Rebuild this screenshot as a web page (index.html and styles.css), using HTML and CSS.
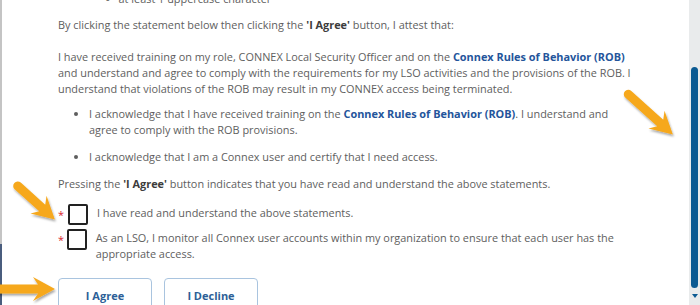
FILE: index.html
```html
<!DOCTYPE html>
<html lang="en">
<head>
    <meta charset="UTF-8">
    <title>Rules of Behavior</title>
    <link rel="stylesheet" href="styles.css">
</head>
<body>
    <div class="frame">
        <div class="content">
            <ul class="rules">
                <li>at least 1 uppercase character</li>
            </ul>
            <p class="attest">By clicking the statement below then clicking the <b>'I Agree'</b> button, I attest that:</p>
            <p>I have received training on my role, CONNEX Local Security Officer and on the <a href="#">Connex Rules of Behavior (ROB)</a> and understand and agree to comply with the requirements for my LSO activities and the provisions of the ROB. I understand that violations of the ROB may result in my CONNEX access being terminated.</p>
            <ul class="acks">
                <li>I acknowledge that I have received training on the <a href="#">Connex Rules of Behavior (ROB)</a>. I understand and agree to comply with the ROB provisions.</li>
                <li>I acknowledge that I am a Connex user and certify that I need access.</li>
            </ul>
            <p>Pressing the <b>'I Agree'</b> button indicates that you have read and understand the above statements.</p>
            <label class="confirm">
                <span class="req">*</span>
                <span class="box"></span>
                <span class="label-text">I have read and understand the above statements.</span>
            </label>
            <label class="confirm">
                <span class="req">*</span>
                <span class="box"></span>
                <span class="label-text">As an LSO, I monitor all Connex user accounts within my organization to ensure that each user has the appropriate access.</span>
            </label>
            <div class="actions">
                <button type="button">I Agree</button>
                <button type="button">I Decline</button>
            </div>
        </div>
        <div class="scrollbar">
            <div class="thumb"></div>
            <div class="down"></div>
        </div>
    </div>

    <!-- callout arrows drawn over the screenshot -->
    <svg class="arrows" width="700" height="305" viewBox="0 0 700 305">
        <defs>
            <filter id="shadow" x="-20%" y="-20%" width="140%" height="140%">
                <feDropShadow dx="1" dy="2" stdDeviation="1.2" flood-color="#000" flood-opacity="0.35"/>
            </filter>
        </defs>
        <g fill="#f6a81c" filter="url(#shadow)">
            <path d="M3 -4.5 L-40 -4.5 A4.5 4.5 0 0 0 -40 4.5 L3 4.5 L-2 12 L20 0 L-2 -12 Z" transform="translate(658 121) rotate(42)"/>
            <path d="M3 -4.5 L-30 -4.5 A4.5 4.5 0 0 0 -30 4.5 L3 4.5 L-2 12 L20 0 L-2 -12 Z" transform="translate(40 206) rotate(42)"/>
            <path d="M3 -4.5 L-40 -4.5 L-40 4.5 L3 4.5 L-2 12 L20 0 L-2 -12 Z" transform="translate(35 289)"/>
        </g>
    </svg>
</body>
</html>
```

FILE: styles.css
```css
* {
    margin: 0;
    padding: 0;
    box-sizing: border-box;
}

body {
    font-family: 'Open Sans', sans-serif;
    font-size: 10.9px;
    line-height: 16px;
    color: #5e5e5e;
    background-color: #fff;
    width: 700px;
    height: 305px;
    overflow: hidden;
}

.frame {
    display: flex;
    height: 305px;
    border-left: 2px solid #c4c4c4;
    border-image: linear-gradient(to bottom, #c4c4c4 243px, #4a5d7e 243px) 1;
}

.content {
    flex: 1;
    min-width: 0;
    margin-top: -9px;
    padding: 0 52px 0 56px;
}

a {
    color: #24559b;
    font-weight: 700;
    text-decoration: none;
}

b {
    color: #3c3c3c;
}

p {
    margin-bottom: 12px;
}

.attest {
    margin-top: 10px;
    margin-bottom: 16px;
}

.rules {
    list-style: none;
    padding-left: 62px;
}

.rules li::before {
    content: "-";
    margin-left: -14px;
    margin-right: 9px;
}

.acks {
    padding-left: 31px;
    margin-top: -3px;
    margin-bottom: 11px;
}

.acks li {
    margin-bottom: 11px;
}

.confirm {
    display: flex;
    align-items: flex-start;
    margin-top: 4px;
}

.req {
    color: #d8262e;
    width: 10px;
    margin-top: 3px;
}

.box {
    flex: none;
    width: 20px;
    height: 21px;
    border: 2px solid #222;
    border-radius: 2px;
    margin-right: 9px;
}

.label-text {
    margin-top: 1px;
}

.actions {
    display: flex;
    gap: 12px;
    margin-top: 16px;
}

.actions button {
    width: 94px;
    height: 34px;
    background-color: #fff;
    border: 1.5px solid #a9c4df;
    border-radius: 4px;
    font-family: 'Open Sans', sans-serif;
    font-size: 11px;
    font-weight: 700;
    color: #2d5f97;
    cursor: pointer;
}

.scrollbar {
    flex: none;
    width: 11px;
    background-color: #e9ebec;
}

.thumb {
    margin: 67px 0 0 2px;
    width: 7px;
    height: 221px;
    border-radius: 4px;
    background-color: #0b5a92;
}

.down {
    margin: 6px 0 0 3px;
    width: 0;
    height: 0;
    border-left: 3px solid transparent;
    border-right: 3px solid transparent;
    border-top: 4px solid #0b5a92;
}

.arrows {
    position: absolute;
    left: 0;
    top: 0;
    pointer-events: none;
}
```
